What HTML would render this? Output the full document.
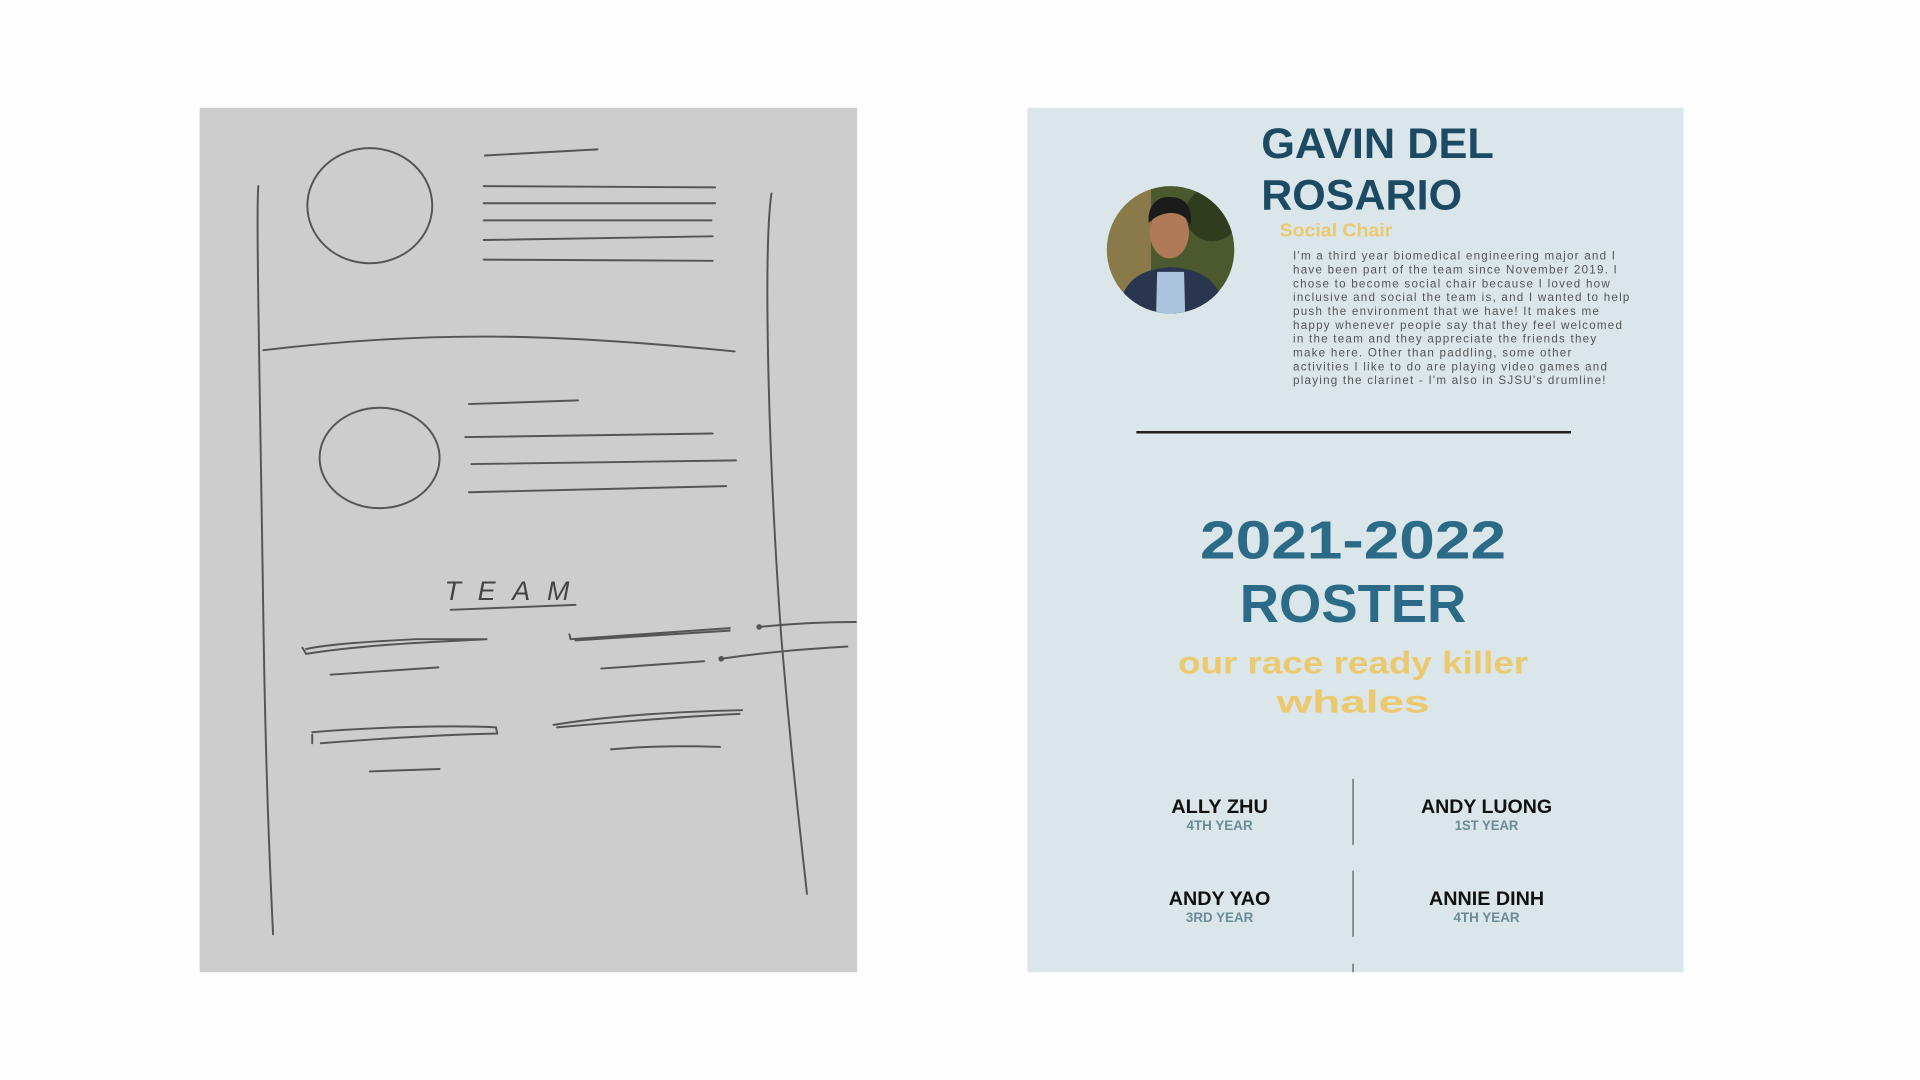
<!DOCTYPE html>
<html><head><meta charset="utf-8"><style>
html,body{margin:0;padding:0;background:#fefefe;width:1920px;height:1080px;overflow:hidden}
svg{display:block}
</style></head><body>
<svg width="1920" height="1080" viewBox="0 0 1568 882" preserveAspectRatio="none" xmlns="http://www.w3.org/2000/svg">
<rect width="1568" height="882" fill="#fefefe"/>
<rect x="163" y="88" width="537" height="706" fill="#cdcdcd"/>
<g fill="none" stroke="#555" stroke-width="1.6" stroke-linecap="round">
<path d="M211 152 C209 170 212 300 215 500 C217 640 221 720 223 763"/>
<path d="M630 158 C624 200 626 350 638 520 C648 640 656 700 659 730"/>
<ellipse cx="302" cy="168" rx="51" ry="47"/>
<path d="M396 127 L488 122"/>
<path d="M395 152 L584 153"/>
<path d="M395 166 L584 166"/>
<path d="M395 180 L581 180"/>
<path d="M395 196 L582 193"/>
<path d="M395 212 L582 213"/>
<path d="M215 286 C350 270 450 272 600 287"/>
<ellipse cx="310" cy="374" rx="49" ry="41"/>
<path d="M383 330 L472 327"/>
<path d="M380 357 L582 354"/>
<path d="M385 379 L601 376"/>
<path d="M383 402 L593 397"/>
<path d="M368 498 L470 494"/>
<path d="M247 529 L250 534 C300 526 360 524 398 522 L340 522 C300 524 270 526 250 530"/>
<path d="M270 551 L358 545"/>
<path d="M465 518 L466 522 L596 513 M470 523 L596 515"/>
<path d="M491 546 L575 540"/>
<circle cx="620" cy="512" r="1.5"/>
<path d="M620 512 C650 509 680 508 699 508"/>
<circle cx="589" cy="538" r="1.5"/>
<path d="M589 538 C630 532 660 530 692 528"/>
<path d="M255 600 L255 607 M255 598 C300 594 370 592 405 594 L406 599 C360 600 300 604 262 607"/>
<path d="M452 592 C500 584 560 581 606 580 M455 594 C500 590 560 585 604 583"/>
<path d="M302 630 L359 628"/>
<path d="M499 612 C530 609 560 609 588 610"/>
</g>
<text x="363" y="490" font-family="Liberation Sans, sans-serif" font-size="22" fill="#444" letter-spacing="3" font-style="italic" textLength="105">TEAM</text>
<rect x="839" y="88" width="536" height="706" fill="#dae6ea"/>
<g font-family="'Liberation Sans',sans-serif" font-weight="bold">
<text x="1030" y="129" font-size="35" fill="#1c4a63" textLength="190" lengthAdjust="spacingAndGlyphs">GAVIN DEL</text>
<text x="1030" y="171" font-size="35" fill="#1c4a63" textLength="164" lengthAdjust="spacingAndGlyphs">ROSARIO</text>
<text x="1045" y="193" font-size="15" fill="#ecc96e" textLength="92" lengthAdjust="spacingAndGlyphs">Social Chair</text>
</g>
<g font-family="'Liberation Sans',sans-serif" font-size="9.5" fill="#555" letter-spacing="1.0">
<text x="1056" y="212">I'm a third year biomedical engineering major and I</text>
<text x="1056" y="223.3">have been part of the team since November 2019. I</text>
<text x="1056" y="234.6">chose to become social chair because I loved how</text>
<text x="1056" y="245.9">inclusive and social the team is, and I wanted to help</text>
<text x="1056" y="257.2">push the environment that we have! It makes me</text>
<text x="1056" y="268.5">happy whenever people say that they feel welcomed</text>
<text x="1056" y="279.8">in the team and they appreciate the friends they</text>
<text x="1056" y="291.1">make here. Other than paddling, some other</text>
<text x="1056" y="302.4">activities I like to do are playing video games and</text>
<text x="1056" y="313.7">playing the clarinet - I'm also in SJSU's drumline!</text>
</g>
<defs><clipPath id="c"><ellipse cx="956" cy="204" rx="52" ry="52"/></clipPath></defs>
<g clip-path="url(#c)">
<rect x="900" y="150" width="112" height="110" fill="#4b5a2e"/>
<rect x="900" y="150" width="40" height="110" fill="#8a7a4a"/>
<circle cx="990" cy="175" r="22" fill="#2f3d1e"/>
<path d="M912 262 C915 225 935 220 956 218 C978 220 998 225 1002 262 Z" fill="#2a3550"/>
<path d="M945 222 L967 222 L968 262 L944 262 Z" fill="#a9c4dc"/>
<ellipse cx="955" cy="190" rx="16" ry="21" fill="#b07a58"/>
<path d="M938 182 C937 165 948 160 956 161 C966 161 975 167 972 184 C968 172 950 170 938 182Z" fill="#1b1b1b"/>
</g>
<line x1="928" y1="353" x2="1283" y2="353" stroke="#222" stroke-width="2"/>
<g font-family="'Liberation Sans',sans-serif" font-weight="bold" text-anchor="middle">
<text x="1105" y="456" font-size="44" fill="#2b6b88" textLength="250" lengthAdjust="spacingAndGlyphs">2021-2022</text>
<text x="1105" y="508" font-size="44" fill="#2b6b88" textLength="185" lengthAdjust="spacingAndGlyphs">ROSTER</text>
<text x="1105" y="550" font-size="26" fill="#ecc96e" textLength="286" lengthAdjust="spacingAndGlyphs">our race ready killer</text>
<text x="1105" y="582" font-size="26" fill="#ecc96e" textLength="125" lengthAdjust="spacingAndGlyphs">whales</text>
</g>
<g stroke="#777" stroke-width="1.3">
<line x1="1105" y1="636" x2="1105" y2="690"/>
<line x1="1105" y1="711" x2="1105" y2="765"/>
<line x1="1105" y1="787" x2="1105" y2="794"/>
</g>
<g font-family="'Liberation Sans',sans-serif" text-anchor="middle" font-weight="bold">
<text x="996" y="664" font-size="16" fill="#111" textLength="79" lengthAdjust="spacingAndGlyphs">ALLY ZHU</text>
<text x="996" y="678" font-size="11" fill="#6a8c96" textLength="54" lengthAdjust="spacingAndGlyphs">4TH YEAR</text>
<text x="1214" y="664" font-size="16" fill="#111" textLength="107" lengthAdjust="spacingAndGlyphs">ANDY LUONG</text>
<text x="1214" y="678" font-size="11" fill="#6a8c96" textLength="52" lengthAdjust="spacingAndGlyphs">1ST YEAR</text>
<text x="996" y="739" font-size="16" fill="#111" textLength="83" lengthAdjust="spacingAndGlyphs">ANDY YAO</text>
<text x="996" y="753" font-size="11" fill="#6a8c96" textLength="55" lengthAdjust="spacingAndGlyphs">3RD YEAR</text>
<text x="1214" y="739" font-size="16" fill="#111" textLength="94" lengthAdjust="spacingAndGlyphs">ANNIE DINH</text>
<text x="1214" y="753" font-size="11" fill="#6a8c96" textLength="54" lengthAdjust="spacingAndGlyphs">4TH YEAR</text>
</g>
</svg>
</body></html>
